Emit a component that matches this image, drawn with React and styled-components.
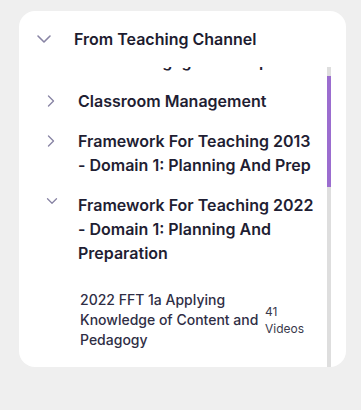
import React, { useLayoutEffect, useRef, useState } from 'react'
import styled, { createGlobalStyle } from 'styled-components'
import { ChevronDown, ChevronRight } from 'lucide-react'

const Global = createGlobalStyle`
  * { box-sizing: border-box; }
  body {
    margin: 0;
    background: #efefef;
    font-family: Inter, "Noto Sans", sans-serif;
  }
`

const Page = styled.div`
  padding: 11px 0 0 19px;
  height: 410px;
`

const Card = styled.section`
  width: 327px;
  height: 356px;
  background: #ffffff;
  border-radius: 16px;
  overflow: hidden;
  display: flex;
  flex-direction: column;
`

const Header = styled.div`
  height: 56px;
  flex-shrink: 0;
  display: flex;
  align-items: center;
  gap: 18px;
  padding-left: 13px;
  color: #8884a4;

  h2 {
    margin: 0;
    font-size: 16px;
    font-weight: 600;
    color: #1d1c30;
  }
`

const ScrollArea = styled.div`
  flex: 1;
  min-height: 0;
  display: flex;
  margin-right: 15px;
`

const Scroller = styled.div`
  flex: 1;
  overflow-y: auto;
  padding: 6px 0 4px 22px;
  scrollbar-width: none;

  &::-webkit-scrollbar {
    display: none;
  }
`

const Track = styled.div`
  width: 4px;
  flex-shrink: 0;
  background: #dedede;
`

const Thumb = styled.div`
  width: 100%;
  background: #9b6dcf;
`

const List = styled.ul`
  list-style: none;
  margin: 0;
  padding: 0;
  display: flex;
  flex-direction: column;
  gap: 16px;
`

const Row = styled.li`
  display: flex;
  align-items: flex-start;
  gap: 17px;
`

const IconBox = styled.span`
  width: 20px;
  height: 24px;
  flex-shrink: 0;
  display: flex;
  align-items: center;
  justify-content: center;
  color: #8884a4;
  margin-top: ${p => (p.$open ? '-4px' : '0')};
  padding-left: ${p => (p.$open ? '2px' : '0')};
`

const Body = styled.div`
  flex: 1;
  min-width: 0;
  padding-right: 11px;
`

const Title = styled.div`
  font-size: 16px;
  font-weight: 600;
  line-height: 24px;
  color: #1f1e33;
`

const SubList = styled.ul`
  list-style: none;
  margin: 25px 0 0;
  padding: 0 11px 0 2px;
  display: flex;
  flex-direction: column;
  gap: 24px;
`

const SubItem = styled.li`
  display: flex;
  align-items: center;
  gap: 3px;
`

const SubTitle = styled.span`
  flex: 1;
  font-size: 14px;
  font-weight: 500;
  line-height: 20px;
  color: #2f2e45;
`

const Count = styled.span`
  width: 40px;
  flex-shrink: 0;
  font-size: 12px;
  line-height: 17px;
  color: #3a3a4c;
`

const topics = [
  { title: 'Student Engagement Tips' },
  { title: 'Classroom Management' },
  { title: 'Framework For Teaching 2013 - Domain 1: Planning And Prep' },
  {
    title: 'Framework For Teaching 2022 - Domain 1: Planning And Preparation',
    open: true,
    items: [
      { title: '2022 FFT 1a Applying Knowledge of Content and Pedagogy', count: 41 },
      { title: '2022 FFT 1b Knowing and Valuing Students', count: 38 },
      { title: '2022 FFT 1c Setting Instructional Outcomes', count: 27 },
      { title: '2022 FFT 1d Using Resources Effectively', count: 19 },
      { title: '2022 FFT 1e Planning Coherent Instruction', count: 33 },
      { title: '2022 FFT 1f Designing Student Assessments', count: 24 },
    ],
  },
  { title: 'Framework For Teaching 2022 - Domain 2: Learning Environments' },
  { title: 'Framework For Teaching 2022 - Domain 3: Learning Experiences' },
]

export default function App() {
  const ref = useRef(null)
  const [thumb, setThumb] = useState({ top: 0, height: 0 })

  useLayoutEffect(() => {
    const el = ref.current
    if (!el) return
    el.scrollTop = 24
    const update = () => {
      const { scrollTop, scrollHeight, clientHeight } = el
      const height = (clientHeight * clientHeight) / scrollHeight
      const range = scrollHeight - clientHeight
      const top = range > 0 ? (scrollTop / range) * (clientHeight - height) : 0
      setThumb({ top, height })
    }
    update()
    el.addEventListener('scroll', update)
    return () => el.removeEventListener('scroll', update)
  }, [])

  return (
    <Page>
      <Global />
      <Card>
        <Header>
          <ChevronDown size={24} strokeWidth={1.6} />
          <h2>From Teaching Channel</h2>
        </Header>

        <ScrollArea>
          <Scroller ref={ref}>
            <List>
              {topics.map(t => (
                <Row key={t.title}>
                  <IconBox $open={t.open}>
                    {t.open
                      ? <ChevronDown size={18} strokeWidth={1.7} />
                      : <ChevronRight size={20} strokeWidth={1.6} />}
                  </IconBox>
                  <Body>
                    <Title>{t.title}</Title>
                    {t.items && (
                      <SubList>
                        {t.items.map(i => (
                          <SubItem key={i.title}>
                            <SubTitle>{i.title}</SubTitle>
                            <Count>{i.count} Videos</Count>
                          </SubItem>
                        ))}
                      </SubList>
                    )}
                  </Body>
                </Row>
              ))}
            </List>
          </Scroller>
          <Track>
            <Thumb style={{ marginTop: thumb.top, height: thumb.height }} />
          </Track>
        </ScrollArea>
      </Card>
    </Page>
  )
}
